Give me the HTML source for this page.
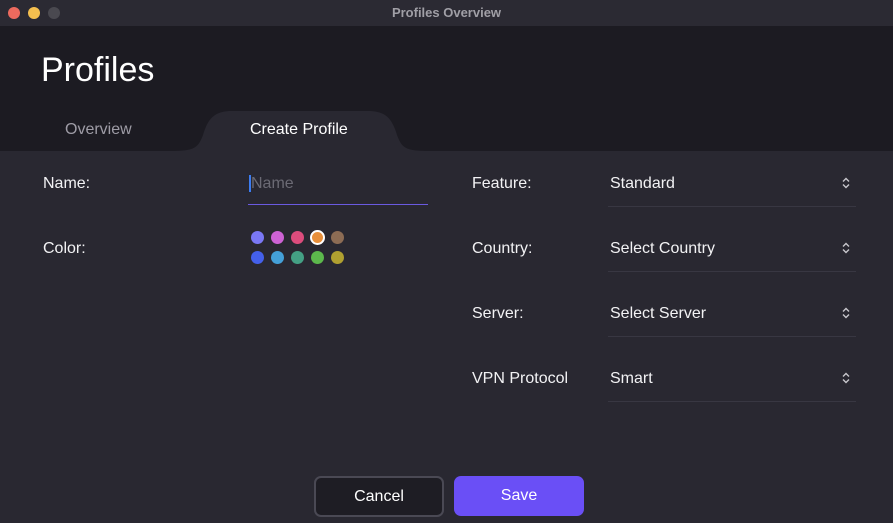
<html><head><style>
body{margin:0;width:893px;height:523px;overflow:hidden;background:#292831;font-family:"Liberation Sans",sans-serif;color:#fff;position:relative}
.abs{position:absolute}
.lbl{font-size:16px;color:#f2f2f4}
.dot{position:absolute;width:13px;height:13px;border-radius:50%}
.sep{position:absolute;left:608px;width:248px;height:1px;background:#383742}
.chev{position:absolute;left:841px}
</style></head><body>
<div class="abs" style="left:0;top:0;width:893px;height:26px;background:#2b2a33"></div>
<div class="abs" style="left:8px;top:7px;width:12px;height:12px;border-radius:50%;background:#ec6a5e"></div>
<div class="abs" style="left:28px;top:7px;width:12px;height:12px;border-radius:50%;background:#f4bf4f"></div>
<div class="abs" style="left:48px;top:7px;width:12px;height:12px;border-radius:50%;background:#4a4950"></div>
<div class="abs" style="left:0;top:5px;width:893px;text-align:center;font-size:13px;font-weight:bold;color:#a09fa6">Profiles Overview</div>
<div class="abs" style="left:0;top:26px;width:893px;height:125px;background:#1c1b22"></div>
<div class="abs" style="left:41px;top:51px;font-size:34px;color:#fff">Profiles</div>
<svg class="abs" style="left:170px;top:110px" width="260" height="42"><path d="M0 41 C25 41 28 38 33 25 C38 8 45 1 62 1 L198 1 C215 1 222 8 227 25 C232 38 235 41 260 41 L260 42 L0 42Z" fill="#292831"/></svg>
<div class="abs" style="left:65px;top:121px;font-size:16px;color:#9e9ca6">Overview</div>
<div class="abs" style="left:250px;top:121px;font-size:16px;color:#fff">Create Profile</div>
<div class="abs lbl" style="left:43px;top:175px">Name:</div>
<div class="abs lbl" style="left:43px;top:240px">Color:</div>
<div class="abs" style="left:249px;top:175px;width:2px;height:17px;background:#3c7cf0"></div>
<div class="abs" style="left:251px;top:175px;font-size:16px;color:#6b6a74">Name</div>
<div class="abs" style="left:248px;top:204px;width:180px;height:1px;background:#6a5ae0"></div>
<div class="dot" style="left:251px;top:231px;background:#7a78f5"></div>
<div class="dot" style="left:271px;top:231px;background:#cd62d4"></div>
<div class="dot" style="left:291px;top:231px;background:#dc4c7c"></div>
<div class="dot" style="left:310px;top:230px;width:11px;height:11px;border:2px solid #fff;background:#e88f3a"></div>
<div class="dot" style="left:331px;top:231px;background:#8c6c54"></div>
<div class="dot" style="left:251px;top:251px;background:#4460ea"></div>
<div class="dot" style="left:271px;top:251px;background:#44a0d8"></div>
<div class="dot" style="left:291px;top:251px;background:#44a084"></div>
<div class="dot" style="left:311px;top:251px;background:#5cb84c"></div>
<div class="dot" style="left:331px;top:251px;background:#b0a030"></div>
<div class="abs lbl" style="left:472px;top:175px">Feature:</div>
<div class="abs lbl" style="left:472px;top:240px">Country:</div>
<div class="abs lbl" style="left:472px;top:305px">Server:</div>
<div class="abs lbl" style="left:472px;top:370px">VPN Protocol</div>
<div class="abs lbl" style="left:610px;top:175px">Standard</div>
<div class="abs lbl" style="left:610px;top:240px">Select Country</div>
<div class="abs lbl" style="left:610px;top:305px">Select Server</div>
<div class="abs lbl" style="left:610px;top:370px">Smart</div>
<svg class="chev" style="top:177px" width="10" height="12"><path d="M2 4.5L5 1.5L8 4.5M2 7.5L5 10.5L8 7.5" stroke="#c8c7cc" stroke-width="1.4" fill="none"/></svg>
<svg class="chev" style="top:242px" width="10" height="12"><path d="M2 4.5L5 1.5L8 4.5M2 7.5L5 10.5L8 7.5" stroke="#c8c7cc" stroke-width="1.4" fill="none"/></svg>
<svg class="chev" style="top:307px" width="10" height="12"><path d="M2 4.5L5 1.5L8 4.5M2 7.5L5 10.5L8 7.5" stroke="#c8c7cc" stroke-width="1.4" fill="none"/></svg>
<svg class="chev" style="top:372px" width="10" height="12"><path d="M2 4.5L5 1.5L8 4.5M2 7.5L5 10.5L8 7.5" stroke="#c8c7cc" stroke-width="1.4" fill="none"/></svg>
<div class="sep" style="top:206px"></div>
<div class="sep" style="top:271px"></div>
<div class="sep" style="top:336px"></div>
<div class="sep" style="top:401px"></div>
<div class="abs" style="left:314px;top:476px;width:126px;height:37px;border:2px solid #4a4954;border-radius:7px;background:#1e1d24;text-align:center;line-height:37px;font-size:16px">Cancel</div>
<div class="abs" style="left:454px;top:476px;width:130px;height:40px;border-radius:7px;background:#6a4ff6;text-align:center;line-height:40px;font-size:16px">Save</div>
</body></html>
